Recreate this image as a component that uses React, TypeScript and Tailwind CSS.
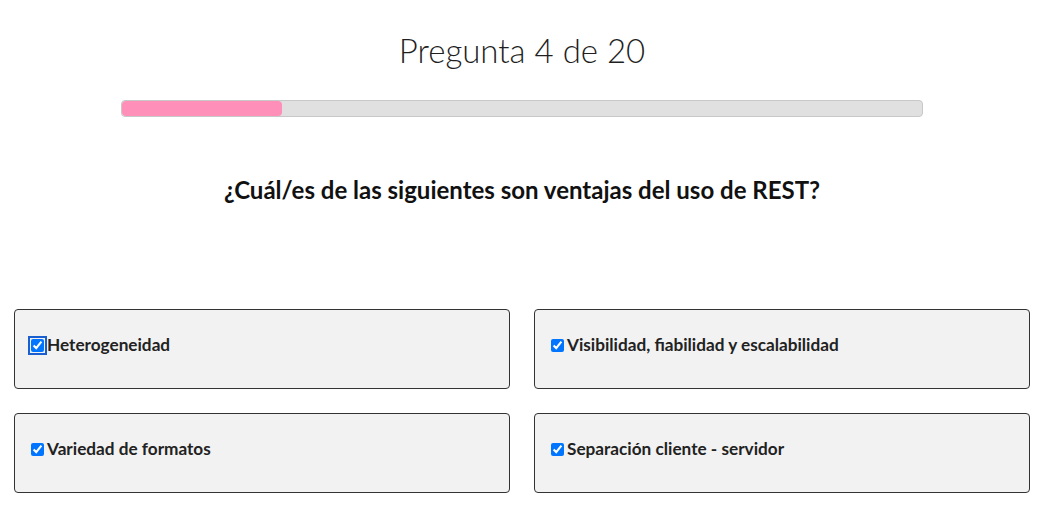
import React from "react";

const options = [
  "Heterogeneidad",
  "Visibilidad, fiabilidad y escalabilidad",
  "Variedad de formatos",
  "Separación cliente - servidor",
];

export default function App() {
  return (
    <div className="w-[1044px] bg-white text-[#1f1f1f]" style={{ fontFamily: "Lato, 'Noto Sans', sans-serif" }}>
      <div className="pt-[28px] text-center text-[33px] font-light leading-[44px]">Pregunta 4 de 20</div>
      <div className="mx-auto mt-[28px] h-[17px] w-[802px] overflow-hidden rounded-[4px] border border-[#c8c8c8] bg-[#e0e0e0]">
        <div className="h-full rounded-[4px] bg-[#fd8fb9]" style={{ width: "20%" }} />
      </div>
      <div className="mt-[57px] text-center text-[24px] font-bold leading-[32px] text-[#111]">
        ¿Cuál/es de las siguientes son ventajas del uso de REST?
      </div>
      <div className="mt-[103px] grid grid-cols-2 gap-x-[24px] gap-y-[24px] px-[14px]">
        {options.map((o, i) => (
          <label
            key={o}
            className="flex h-[80px] items-start rounded-[4px] border border-[#333] bg-[#f2f2f2] pl-[12px] pt-[23px]"
          >
            <span className="flex h-[24px] items-center">
              <input
                type="checkbox"
                defaultChecked
                className={`ml-[4px] mr-[3px] h-[13px] w-[13px] ${i === 0 ? "outline-2 outline-offset-1 outline-[#1a5fd0]" : ""}`}
              />
              <span className="text-[17.2px] font-bold leading-[24px] text-[#222]">{o}</span>
            </span>
          </label>
        ))}
      </div>
    </div>
  );
}
